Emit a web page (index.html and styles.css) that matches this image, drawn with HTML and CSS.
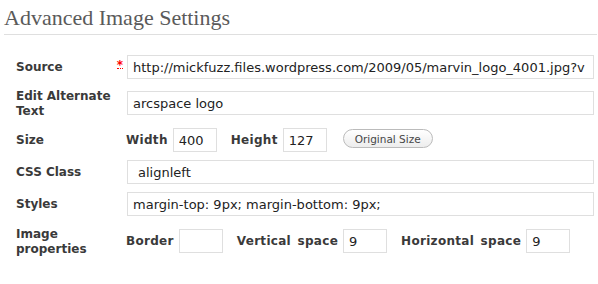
FILE: index.html
```html
<!DOCTYPE html>
<html lang="en">
<head>
    <meta charset="UTF-8">
    <title>Advanced Image Settings</title>
    <link rel="stylesheet" href="styles.css">
</head>
<body>
    <div class="panel">
        <h2 class="title">Advanced Image Settings</h2>

        <div class="settings">
            <label class="label" for="src">Source <span class="req">*</span></label>
            <div class="field">
                <input class="text wide" id="src" type="text" value="http://mickfuzz.files.wordpress.com/2009/05/marvin_logo_4001.jpg?v">
            </div>

            <label class="label multi" for="alt">Edit Alternate Text</label>
            <div class="field">
                <input class="text wide" id="alt" type="text" value="arcspace logo">
            </div>

            <div class="label">Size</div>
            <div class="field inline">
                <label class="sub" for="width">Width</label>
                <input class="text small" id="width" type="text" value="400">
                <label class="sub gap" for="height">Height</label>
                <input class="text small" id="height" type="text" value="127">
                <button class="pill" type="button">Original Size</button>
            </div>

            <label class="label" for="cls">CSS Class</label>
            <div class="field">
                <input class="text wide indent" id="cls" type="text" value="alignleft">
            </div>

            <label class="label" for="style">Styles</label>
            <div class="field">
                <input class="text wide" id="style" type="text" value="margin-top: 9px; margin-bottom: 9px;">
            </div>

            <div class="label multi">Image properties</div>
            <div class="field inline">
                <label class="sub" for="border">Border</label>
                <input class="text small" id="border" type="text" value="">
                <label class="sub gap" for="vspace">Vertical space</label>
                <input class="text small" id="vspace" type="text" value="9">
                <label class="sub gap" for="hspace">Horizontal space</label>
                <input class="text small" id="hspace" type="text" value="9">
            </div>
        </div>
    </div>
</body>
</html>
```

FILE: styles.css
```css
body {
    margin: 0;
    background-color: #fff;
    font-family: "DejaVu Sans", Verdana, sans-serif;
    color: #333;
}
.panel {
    padding: 0 1px 0 4px;
}
.title {
    margin: 0;
    padding: 8px 0 6px;
    font-family: "Liberation Serif", Georgia, serif;
    font-size: 22px;
    font-weight: normal;
    line-height: 20px;
    color: #5a5a5a;
    border-bottom: 1px solid #dfdfdf;
}
.settings {
    display: grid;
    grid-template-columns: 111px 1fr;
    grid-template-rows: 36px 37px 32px 32px 37px auto;
    margin-top: 20px;
    padding-left: 12px;
    padding-right: 3px;
}
.label {
    display: flex;
    align-items: flex-start;
    padding-top: 4px;
    font-size: 12px;
    font-weight: bold;
    line-height: 16px;
    color: #3a3a3a;
}
.label.multi {
    padding-top: 0;
    margin-top: -2px;
    padding-right: 10px;
    line-height: 15px;
}
.req {
    margin-left: auto;
    margin-right: 4px;
    color: #f00;
    border-bottom: 1px dotted #f00;
    line-height: 12px;
    height: 9px;
}
.field {
    display: flex;
    align-items: flex-start;
}
.inline {
    margin-left: -1px;
}
.sub {
    padding-top: 4px;
    font-size: 12px;
    font-weight: bold;
    line-height: 16px;
    letter-spacing: 0.3px;
    word-spacing: 2px;
    color: #3a3a3a;
    margin-right: 5px;
}
.sub.gap {
    margin-left: 14px;
}
.text {
    box-sizing: border-box;
    height: 24px;
    padding: 0 5px;
    border: 1px solid #dfdfdf;
    background-color: #fff;
    font-family: "DejaVu Sans", Verdana, sans-serif;
    font-size: 13px;
    color: #222;
    outline: none;
}
.wide {
    width: 100%;
}
.indent {
    padding-left: 10px;
}
.small {
    width: 44px;
}
.pill {
    height: 19px;
    margin: 1px 0 0 16px;
    padding: 0 11px;
    border: 1px solid #bbb;
    border-radius: 10px;
    background: linear-gradient(#fff, #ededed);
    font-family: "DejaVu Sans", Verdana, sans-serif;
    font-size: 10.5px;
    color: #464646;
}
```
